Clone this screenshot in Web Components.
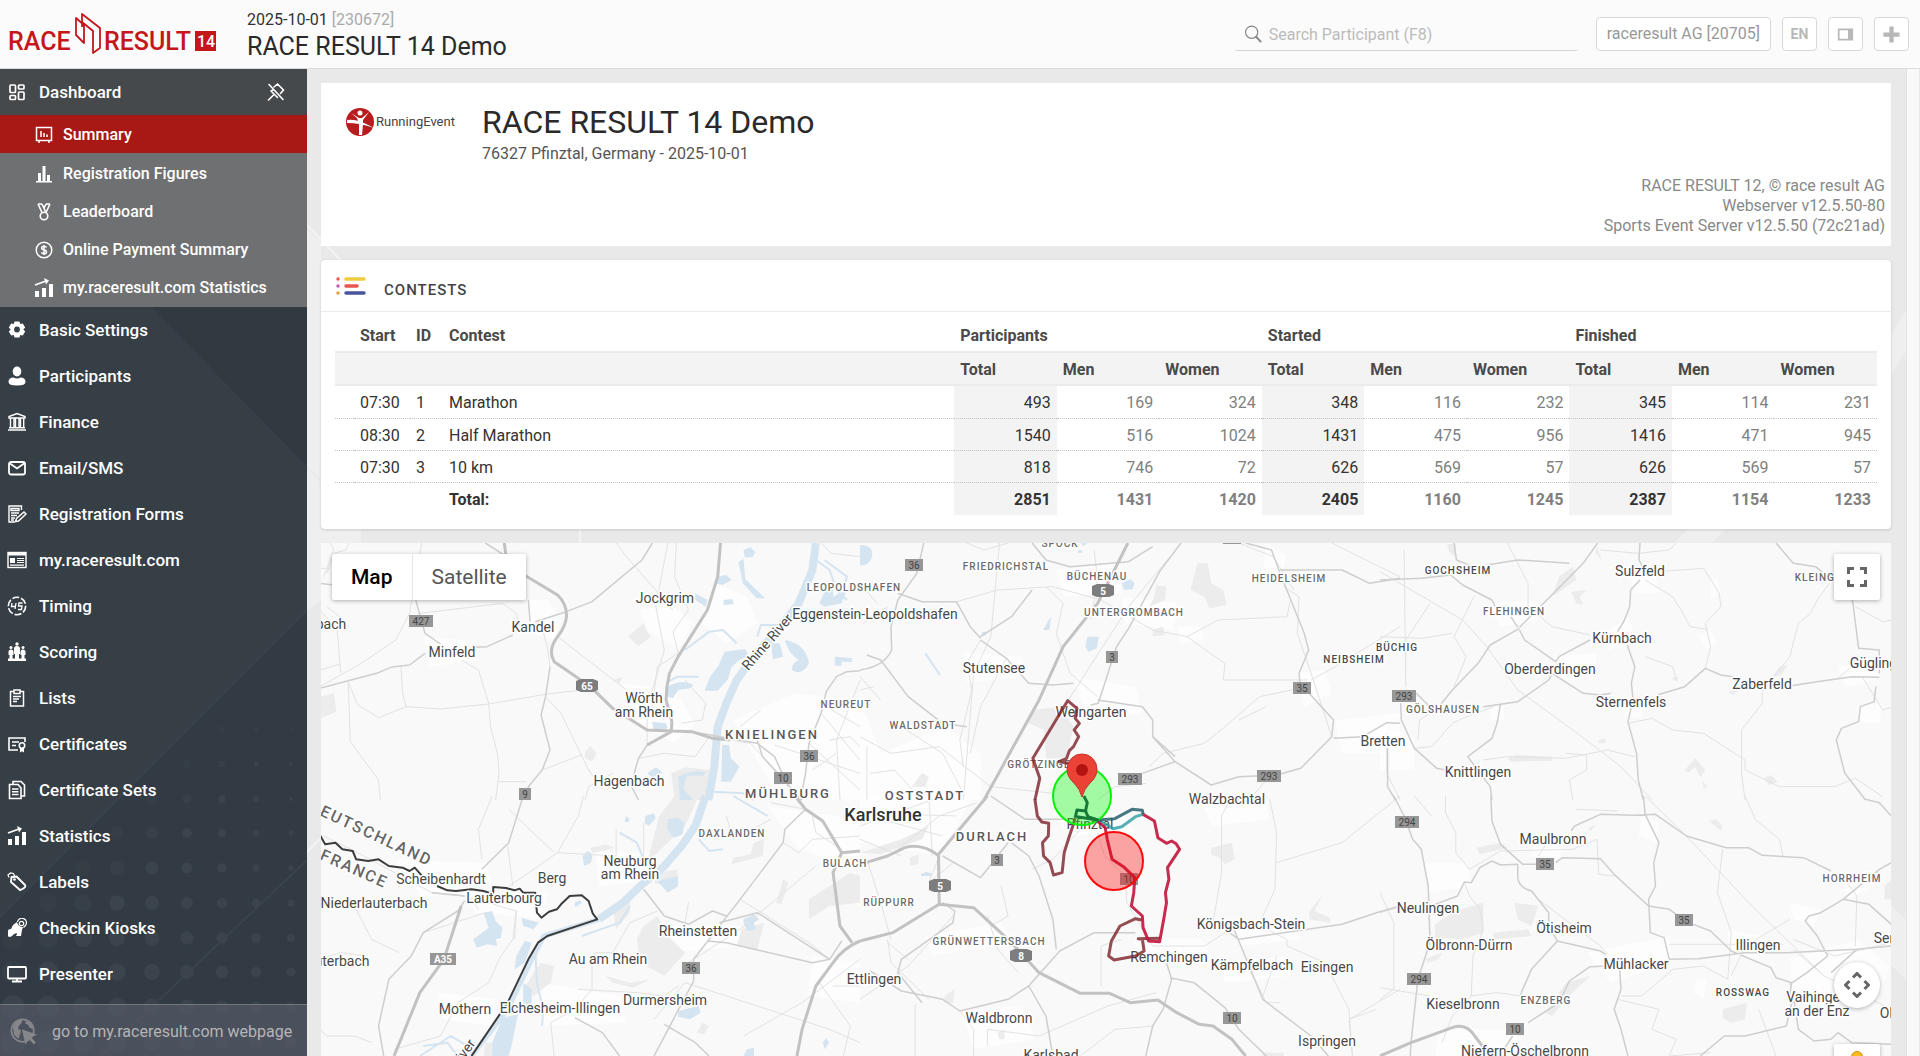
<!DOCTYPE html>
<html lang="en">
<head>
<meta charset="utf-8">
<title>RACE RESULT 14 Demo</title>
<style>
html,body{height:100%;margin:0}
body{font-family:Roboto,"Liberation Sans",sans-serif;font-size:16px;line-height:20px;color:#333;background:#e9e9e9;overflow:hidden}
</style>
</head>
<body>
<rr-app>
  <rr-topbar slot="top" date="2025-10-01" event-id="[230672]" name="RACE RESULT 14 Demo"></rr-topbar>
  <rr-sidebar slot="side"></rr-sidebar>
  <rr-event-header>
    <span slot="title">RACE RESULT 14 Demo</span>
    <span slot="place">76327 Pfinztal, Germany - 2025-10-01</span>
    <div slot="versions">RACE RESULT 12, © race result AG</div>
    <div slot="versions">Webserver v12.5.50-80</div>
    <div slot="versions">Sports Event Server v12.5.50 (72c21ad)</div>
  </rr-event-header>
  <rr-card heading="CONTESTS"><rr-contests></rr-contests></rr-card>
  <rr-map></rr-map>
</rr-app>

<script>
const ICONS = {
  dashboard:'<g fill="none" stroke="currentColor" stroke-width="1.7"><rect x="3" y="3" width="5.5" height="7.5" rx="1"/><rect x="3" y="13.5" width="5.5" height="4" rx="1"/><rect x="11.5" y="3" width="5.5" height="4" rx="1"/><rect x="11.5" y="10" width="5.5" height="7.5" rx="1"/></g>',
  summary:'<g fill="none" stroke="currentColor" stroke-width="1.5"><rect x="2.5" y="2.5" width="15" height="13"/><path d="M5 16v2M15 16v2M7 6v6M10 8v4M13 9.500v2.500"/></g>',
  bars:'<path fill="currentColor" d="M2 17h16v1.500H2zM4 9h3v8H4zM8.500 2h3v15h-3zM13 11h3v6h-3z"/>',
  medal:'<g fill="none" stroke="currentColor" stroke-width="1.600"><circle cx="10" cy="14" r="3.800"/><path d="M4 2l4 8.500M8 2l3.500 7.500M16 2l-4 8.500M12 2l-2 4M4 2h4M12 2h4"/></g>',
  coin:'<circle cx="10" cy="10" r="7.800" fill="none" stroke="currentColor" stroke-width="1.500"/><path d="M12.500 7.500q-.8-1.200-2.500-1.200-2.300 0-2.300 1.800 0 1.600 2.300 1.900 2.500.3 2.500 1.900 0 1.900-2.500 1.900-1.800 0-2.700-1.400M10 5v10" fill="none" stroke="currentColor" stroke-width="1.500"/>',
  stats:'<path fill="currentColor" d="M1 13h4v6H1zM8 10h4v9H8zM15 6h4v13h-4z"/><path d="M1 7l11-4" stroke="currentColor" stroke-width="1.800"/><path fill="currentColor" d="M10 0l5 2.500-3 4z"/>',
  unpin:'<g fill="none" stroke="currentColor" stroke-width="1.600" stroke-linecap="round"><path d="M3 2.500l14 15M8 5l3.500-3 6 6-3 3.500M5 9l6.500 6.500M8 12.500L2.500 18M5 9l2-1"/></g>',
  gear:'<path fill="currentColor" fill-rule="evenodd" d="M7.500 1.500h5l.7 2.500 2.600-.6 2.400 4-1.900 2.100 1.900 2.100-2.400 4-2.600-.6-.7 2.500h-5l-.7-2.500-2.600.6-2.400-4 1.900-2.100-1.900-2.100 2.400-4 2.600.6zM10 6.600a2.900 2.900 0 100 5.800 2.900 2.900 0 000-5.800z"/>',
  person:'<ellipse cx="10" cy="5.500" rx="4.300" ry="5" fill="currentColor"/><path fill="currentColor" d="M1.500 16q0-4.500 5-4.500 3.500 2 7 0 5 0 5 4.500 0 3.500-8.500 3.500T1.500 16z"/>',
  bank:'<path fill="none" stroke="currentColor" stroke-width="1.400" d="M2 6V4.500l8-3 8 3V6zM3.500 6.500v9M7 6.500v9M8.500 6.500v9M12 6.500v9M13.500 6.500v9M16.700 6.500v9M2 15.700h16M1 18h18"/>',
  mail:'<rect x="2" y="4" width="16" height="12.500" rx="2" fill="none" stroke="currentColor" stroke-width="1.800"/><path d="M3 5.500l7 5 7-5" fill="none" stroke="currentColor" stroke-width="1.800"/>',
  form:'<path fill="none" stroke="currentColor" stroke-width="1.400" d="M14.500 6V2H2v16h6M4 4.500h8v2H4zM4 9h8M4 11.500h6M4 14h4M4 16h3M8.500 17.500l1-3L17 8l2 2-7.500 7z"/>',
  web:'<rect x="1" y="2.500" width="18" height="15" fill="none" stroke="currentColor" stroke-width="1.400"/><path fill="currentColor" d="M1 2.500h18v3H1zM3 8h5v5H3z"/><path stroke="currentColor" stroke-width="1.200" d="M10 8.500h7M10 10.500h7M10 12.500h7M3 15.200h14"/>',
  timer:'<circle cx="10" cy="10" r="8.700" fill="none" stroke="currentColor" stroke-width="1.600" stroke-dasharray="7 2"/><path d="M5 7l-.5 3.500H9M9 7l-1 6M15.500 7H12l-.5 3h3.500l-.5 3.500H11" fill="none" stroke="currentColor" stroke-width="1.300"/>',
  podium:'<path fill="currentColor" d="M1 16.500h18V19H1zM1.500 10q0-2.500 2.500-2.500T6.500 10v3h-1v4h-3v-4h-1zM7 6.500Q7 4 10 4t3 2.500V12h-1v5H8v-5H7zM13.500 10q0-2.500 2.500-2.500t2.500 2.500v3h-1v4h-3v-4h-1z"/><g fill="currentColor"><circle cx="4" cy="5.500" r="1.500"/><circle cx="10" cy="2" r="1.700"/><circle cx="16" cy="5.500" r="1.500"/></g>',
  list:'<path fill="none" stroke="currentColor" stroke-width="1.500" d="M7 3.500H3.500V18h13V3.500H13M7 2h6v3.500H7zM6 8.500h8M6 11h6M6 13.500h4"/>',
  cert:'<path fill="none" stroke="currentColor" stroke-width="1.600" d="M18 8V4H2v12h9M5 8h7M5 11.500h4"/><circle cx="15" cy="11.500" r="2.700" fill="none" stroke="currentColor" stroke-width="1.600"/><path fill="currentColor" d="M13 14h4v4.500l-2-1.200-2 1.200z"/>',
  sets:'<path fill="none" stroke="currentColor" stroke-width="1.600" d="M6 4V1.500h8l3.500 3.500v11H14M2.500 4.500H11L14 8v10.500H2.500zM5 9h6.500M5 11.700h6.500M5 14.500h6.500"/>',
  label:'<path fill="none" stroke="currentColor" stroke-width="1.900" stroke-linejoin="round" d="M4.500 5l5-.5L18 13q1 1.500-1 3t-4 2L4 10z"/><path fill="none" stroke="currentColor" stroke-width="1.200" d="M2 5.500L1 3l2.500-2 3 .5 1 2.500-1 2"/><circle cx="7.500" cy="7.500" r="1.300" fill="currentColor"/>',
  kiosk:'<path fill="currentColor" d="M6 7l4-3q1 5 6 5l-1 3-1 6h-5l1-2-1-3-3 2-3-2zM1 13q0-2 3-2l3 2 2-1 1 3-3 1-2 2q-3 2-4 0z"/><circle cx="14.500" cy="5.500" r="2.200" fill="none" stroke="currentColor" stroke-width="1.200"/><path d="M10.500 4a4.500 4.500 0 118 3.500l-2 2" fill="none" stroke="currentColor" stroke-width="1.200"/>',
  screen:'<rect x="1" y="3" width="18" height="11.500" rx="1" fill="none" stroke="currentColor" stroke-width="1.800"/><path d="M10 14v3M5 17.500h10" stroke="currentColor" stroke-width="1.800"/>',
  globe:'<circle cx="9" cy="9" r="8" fill="none" stroke="currentColor" stroke-width="1.200"/><path fill="currentColor" d="M2 6l3-4 4-1-1 3-2 2v2l2 1-1 3-1 3-3-3zM11 2l4 2 2 4-3-1-1-2-2-1zM8.500 8l11 4-4.500 1.500 3.500 4-1.500 1.500-3.500-4-2.500 4z"/>',
  search:'<circle cx="8.500" cy="8" r="6.800" fill="none" stroke="currentColor" stroke-width="1.300"/><path d="M13 12.500l6 6.500" stroke="currentColor" stroke-width="2.200"/>',
  panel:'<path fill="currentColor" fill-rule="evenodd" d="M1 3h18v14H1zM3 5v10h10V5z"/>',
  plus:'<path fill="currentColor" d="M7.500 .5h5v7h7v5h-7v7h-5v-7h-7v-5h7z"/>'
};

/* Registers an element whose open shadow root holds the given markup. */
function element(name, render) {
  customElements.define(name, class extends HTMLElement {
    constructor() { super(); this.attachShadow({mode: 'open'}); }
    connectedCallback() {
      this.shadowRoot.innerHTML = typeof render === 'function' ? render(this) : render;
    }
  });
}

element('rr-icon', el => `<style>:host{display:inline-flex;flex:none;width:20px;height:20px}svg{width:100%;height:100%}</style>
<svg viewBox="0 0 20 20" aria-hidden="true">${ICONS[el.getAttribute('name')]}</svg>`);

element('rr-app', `<style>
:host{display:grid;height:100vh;grid-template:69px minmax(0,1fr)/307px minmax(0,1fr)}
header{grid-column:1/3;display:grid}
aside{display:grid;min-height:0}
main{display:grid;min-height:0;overflow:hidden;grid-template-columns:minmax(0,1fr) 14px}
main>*{grid-row:1}
.bg{grid-column:1;width:100%;height:100%;min-height:0}
.col{grid-column:1;display:flex;flex-direction:column;gap:14px;padding:14px 15px 0 14px;min-height:0}
.gutter{grid-column:2;background:#f9f9f9;border-left:1px solid #e4e4e4;border-right:1px solid #e8e8e8;box-sizing:border-box}
</style>
<header><slot name="top"></slot></header>
<aside><slot name="side"></slot></aside>
<main>
<svg class="bg" viewBox="307 69 1599 987" preserveAspectRatio="none" aria-hidden="true"><path d="M307 229v240l14 14V243zM307 466l14 14v120l-14 10zM321 529h40v14h-40zM1674 543l14-14h38l-14 14zM1891 335l15-24v40l-15 24zM1891 905l15 15v60l-15-15z" fill="#efefef"/><path d="M307 225l40 42M580 525v20M307 852l14-14" stroke="#f3f3f3" stroke-width="2"/></svg>
<div class="col"><slot></slot></div><div class="gutter"></div></main>`);

element('rr-topbar', el => `<style>
:host{display:flex;align-items:center;background:#fbfbfb;border-bottom:1px solid #dcdcdc;padding-right:11px;box-sizing:border-box}
.logo{flex:none;width:247px;height:68px}
.logo text{font-family:Roboto,sans-serif;font-weight:500;fill:#c5161c}
.names{display:flex;flex-direction:column;flex:1;padding-top:4px}
.date{line-height:22px}.date span{color:#aaa}
h1{margin:0;font-size:25px;line-height:32px;font-weight:400;color:#2a2a2a}
label{display:flex;align-items:center;gap:7px;width:343px;height:34px;box-sizing:border-box;padding-left:9px;border-bottom:1px solid #d5d5d5;border-radius:3px;color:#888;margin-right:18px}
label rr-icon{width:18px;height:18px}
input{flex:1;min-width:0;border:0;background:none;font:inherit;outline:0;padding:2px 0 0}
input::placeholder{color:#bbb;opacity:1}
button{height:34px;min-width:35px;display:flex;align-items:center;justify-content:center;box-sizing:border-box;border:1px solid #d8d8d8;border-radius:4px;background:#fff;color:#b8b8b8;font:inherit;padding:0;margin-left:11px}
button.acc{padding:0 10px;color:#999;margin:0}
button.lang{font-size:14px;font-weight:700}
button rr-icon{width:17px;height:17px}
</style>
<svg class="logo" viewBox="0 0 247 68" role="img" aria-label="Race Result 14"><text x="8" y="50" font-size="25">RACE</text><text x="104" y="50" font-size="25">RESULT</text>
<path d="M76 18l8 7v18l-8-8zM82 27V14l18 14v20l-7 5V31L82 22" fill="none" stroke="#c5161c" stroke-width="1.800" stroke-linejoin="round"/><rect x="195" y="31" width="21" height="20" fill="#c5161c"/><text x="197" y="47" font-size="16" style="fill:#fff">14</text></svg>
<div class="names"><div class="date">${el.getAttribute('date')} <span>${el.getAttribute('event-id')}</span></div><h1>${el.getAttribute('name')}</h1></div>
<label><rr-icon name="search"></rr-icon><input type="text" aria-label="Search Participant" placeholder="Search Participant (F8)"></label>
<button class="acc">raceresult AG [20705]</button><button class="lang">EN</button><button aria-label="Panel"><rr-icon name="panel"></rr-icon></button><button aria-label="Add"><rr-icon name="plus"></rr-icon></button>`);

element('rr-nav-item', el => `<style>
:host{display:block}
a{display:flex;align-items:center;height:46px;box-sizing:border-box;padding:0 21px 1px 7px;gap:12px;color:#fff;text-decoration:none;font-size:17px;font-weight:500}
a>span{flex:1}
:host([sub]) a{height:38px;padding:2px 20px 0 34px;gap:9px;font-size:16px}
:host([active]) a{background:#a81916}
</style><a href="#"><rr-icon name="${el.getAttribute('icon')}"></rr-icon><span><slot></slot></span><slot name="end"></slot></a>`);

element('rr-sidebar', () => {
  let dots = '';
  for (let k = 0; k < 10; k++) for (let j = 0; j < 9; j++) {
    const o = Math.min(1, (j + k - 5) / 3);
    if (o > 0) dots += `<circle cx="${13 + Math.round(j * 34.75)}" cy="${729 + Math.round(k * 34.75)}" r="${1 + k * .5 + (8 - j) * .85}" opacity="${o}"/>`;
  }
  const sub = [['summary','Summary'],['bars','Registration Figures'],['medal','Leaderboard'],['coin','Online Payment Summary'],['stats','my.raceresult.com Statistics']];
  const items = [['gear','Basic Settings'],['person','Participants'],['bank','Finance'],['mail','Email/SMS'],['form','Registration Forms'],['web','my.raceresult.com'],['timer','Timing'],['podium','Scoring'],['list','Lists'],['cert','Certificates'],['sets','Certificate Sets'],['stats','Statistics'],['label','Labels'],['kiosk','Checkin Kiosks'],['screen','Presenter']];
  return `<style>
:host{display:grid;background:#323b43;overflow:hidden;min-height:0}
svg.bg,nav{grid-area:1/1;min-height:0;width:100%}
svg.bg{height:100%}
nav{display:flex;flex-direction:column;z-index:1}
.head{background:#46494b}
.subs{background:#6f7072;padding-bottom:1px}
.subs rr-nav-item[active]{margin-bottom:1px}
.subs,.head{flex:none}
.rest{flex:1;min-height:0;overflow:hidden}
.foot{flex:none;height:52px;box-sizing:border-box;border-top:1px solid #74777a;background:rgba(84,88,102,.75);display:flex;align-items:center;gap:14px;padding:2px 0 0 10px;color:#b4b5b5;text-decoration:none;white-space:nowrap}
.foot rr-icon{width:28px;height:28px;color:#85868a}
</style>
<svg class="bg" viewBox="0 69 307 987" preserveAspectRatio="none" aria-hidden="true"><path d="M0 307h152l155 159v144L0 917z" fill="#363e46"/><path d="M152 307l155 159V307z" fill="#313941"/><path d="M307 610L0 917M307 860L100 1056" stroke="#3a434b" stroke-width="2"/><g fill="#3b444c">${dots}</g></svg>
<nav aria-label="Main">
<div class="head"><rr-nav-item icon="dashboard">Dashboard<rr-icon slot="end" name="unpin"></rr-icon></rr-nav-item></div>
<div class="subs">${sub.map((s, i) => `<rr-nav-item sub ${i ? '' : 'active'} icon="${s[0]}">${s[1]}</rr-nav-item>`).join('')}</div>
<div class="rest">${items.map(s => `<rr-nav-item icon="${s[0]}">${s[1]}</rr-nav-item>`).join('')}</div>
<a class="foot" href="#"><rr-icon name="globe"></rr-icon>go to my.raceresult.com webpage</a></nav>`;
});

element('rr-event-header', `<style>
:host{display:flex;background:#fff;height:163px;box-sizing:border-box;padding:0 6px 0 24px;flex:none}
.logo{width:137px;height:80px;flex:none}
.t{flex:1;padding-top:20px}
h2{margin:0;font-weight:400;font-size:32px;line-height:38px;color:#2a2a2a}
p{margin:3px 0 0;color:#555}
.v{align-self:flex-end;text-align:right;color:#888;padding-bottom:10px}
</style>
<svg class="logo" viewBox="0 0 137 80" role="img" aria-label="RunningEvent"><circle cx="15" cy="39" r="14" fill="#b81c1f"/><circle cx="15" cy="30" r="2.500" fill="#fff"/><path d="M6 30l8 5h3l7-6-6 8v4l-1 11h-3v-11l-2-6zM2 37q10-2 27 8-14-5-27-5z" fill="#fff"/><text x="31" y="43" font-size="13" fill="#444" font-family="Roboto">RunningEvent</text></svg>
<div class="t"><h2><slot name="title"></slot></h2><p><slot name="place"></slot></p></div>
<div class="v"><slot name="versions"></slot></div>`);

element('rr-card', el => `<style>
:host{display:block;flex:none;background:#fff;border-radius:4px;box-shadow:0 1px 3px rgba(0,0,0,.15)}
header{display:flex;align-items:center;height:51px;border-bottom:1px solid #ebebeb;padding-left:15px;gap:18px}
h3{margin:8px 0 0;font-size:15px;font-weight:500;letter-spacing:1px;color:#444}
svg{width:30px;height:20px}
</style>
<header><svg viewBox="0 0 30 20" aria-hidden="true"><g stroke-width="3.500" stroke-linecap="round"><path d="M10 3h18" stroke="#efcb3f"/><path d="M10 10h11" stroke="#e9574b"/><path d="M10 17h18" stroke="#48559b"/></g><circle cx="2" cy="3" r="1.700" fill="#e9574b"/><circle cx="2" cy="10" r="1.700" fill="#c05cb0"/><circle cx="2" cy="17" r="1.700" fill="#f39a3c"/></svg><h3>${el.getAttribute('heading')}</h3></header><slot></slot>`);

element('rr-contests', () => {
  const rows = [
    ['07:30','1','Marathon',493,169,324,348,116,232,345,114,231],
    ['08:30','2','Half Marathon',1540,516,1024,1431,475,956,1416,471,945],
    ['07:30','3','10 km',818,746,72,626,569,57,626,569,57],
    ['','','Total:',2851,1431,1420,2405,1160,1245,2387,1154,1233]];
  return `<style>
:host{display:block;padding:0 14px 14px}
table{width:100%;border-collapse:separate;border-spacing:0;table-layout:fixed}
.g{width:6.65%}
th,td{padding:2px 6px 0;text-align:left;font-weight:400;box-sizing:border-box;white-space:nowrap;overflow:visible}
th{font-weight:700;color:#4a4a4a}
.a th{height:39px;padding-top:8px;box-sizing:border-box}
.b th{height:35px;background:#f3f3f3;border-top:2px solid #ebebeb;border-bottom:2px solid #ebebeb}
td{height:32px;border-bottom:1px dotted #c4c4c4}
tr:first-child td{height:33px}
.n{text-align:right;color:#808080}
.s{background:#f3f3f3;color:#333}
tr:last-child td{border-bottom:0;font-weight:700}
</style><table><colgroup><col style="width:19px"><col style="width:56px"><col style="width:33px"><col>${'<col class="g">'.repeat(9)}</colgroup>
<thead><tr class="a"><th></th><th>Start</th><th>ID</th><th>Contest</th><th colspan="3">Participants</th><th colspan="3">Started</th><th colspan="3">Finished</th></tr>
<tr class="b"><th colspan="4"></th>${'<th>Total</th><th>Men</th><th>Women</th>'.repeat(3)}</tr></thead>
<tbody>${rows.map(r => `<tr><td></td>${r.map((c, i) => `<td${i > 2 ? ` class="n${i % 3 ? '' : ' s'}"` : ''}>${c}</td>`).join('')}</tr>`).join('')}</tbody></table>`;
});

/* Map sheets: each has its origin on the canvas; coordinates inside a sheet are in sheet units. */
const UX = 2.904, UY = 3;
const SHEETS = [
 {x:320,y:540,
  wood:'M895 290L940 250L950 275L962 290L925 318zM0 470L40 460L48 515L0 535zM770 635L785 618L803 640L790 665L770 655zM850 420L880 410L870 430zM1020 700L1060 682L1135 690L1130 780L1030 780z',
  white:'M600 180h60l40 60-20 60-70-20zM930 210l90-20 60 60-40 80-90-60zM880 430l150 20 60 100-60 60-120-60zM300 290l120 10 30 60-130 20zM1200 540l180-80 188 20v300h-230zM1150 130l90 40 30 80-90 60-70-60z',
  water:'M1230 30l20-8 15 15-10 15-22 0zM1215 65l15-8 5 60 50 50 8 8-25 0-40-45zM1150 110l30-5 15 15-25 15-20-5zM1172 180l25-3 5 15-30 3zM1090 160l35 20-5 20-30-20zM1175 335l60-8 10 20-30 15-20 20-10 35-30 35-38 0 15-40 25-35zM1310 310l25 0 10 40-30 8zM1350 300q60 10 70 70-20 40-50 20 0-20 20-30-30-20-40-60zM1010 440q40-25 75-5l-10 10-35 5-15 25-15-5zM965 545l40 5 5 15-40 8zM950 700l25-18 20 15-30 15zM1168 615l20 0 5 40 25 25-25 45-28 0zM1450 190l20-45 20 0 0 25 40-20-15 40-50 10zM1495 350l50 5 0 10-30 0 0 12-20 0zM1040 710q40-20 80-15l-5 12-50 0-10 40 30 33-40 0z',
  stream:'M1060 330L1130 275L1170 270L1210 310M1440 60L1480 90L1500 150L1530 180M1465 60L1530 110L1520 150M1270 290L1280 255L1340 255M1010 425L1040 410L1100 410M1140 755L1230 760L1260 780',
  hw:'M535 9L542 60L598 108L690 165Q715 190 716 225Q716 255 690 290Q660 330 680 365L750 415L800 455L850 505L950 570L1080 575L1140 595L1190 600M1163 9L1155 110L1125 210L1040 350L1015 400Q1005 440 1005 480L1022 545L1020 575L950 615',
  main:'M1270 600L1285 650L1320 690L1400 780M1568 392L1530 395L1500 410L1470 455L1455 520L1420 610L1410 700L1395 780M278 180L290 225L305 280L350 312M0 445L90 420L165 400L205 382L260 375L305 340M450 322L485 320L560 285M625 245L715 215L790 185L935 60L965 9M668 380L655 470L642 525L668 630L645 690L605 740L600 780M950 615L925 655L915 690L905 740L925 780M1080 575L1270 610L1320 650L1360 740M480 9L535 45M605 180L610 245M0 130L40 135',
  minor:'M82 427L110 495L170 533L250 500L350 507L490 492L660 462L745 452M82 427L88 605L170 720L175 780M235 375L240 460L250 500M410 360L460 390L490 490L495 560L515 640L520 700L510 780M690 290L890 450M655 470L700 520L780 690L800 720M645 690L760 645M0 440L120 370L220 300L260 220L295 9M290 220L530 190L570 220L580 260M640 245L660 320L668 380M1035 9L1030 110L1070 210L1025 275L1040 340L980 380L965 500L1000 540M1010 9L975 200L1000 330L950 500L950 620M860 9L890 50L1025 210M1050 550L1110 540L1120 490L1060 420M925 655L1000 640L1090 650L1130 590L1250 610L1350 720M1455 9L1485 40L1568 50M1470 500L1568 560M1455 520L1568 660M1480 600L1540 590L1568 620M1420 610L1568 750M1430 690L1500 640M1510 780L1500 600L1568 420M1220 560L1280 510M1320 615L1568 700M30 9L40 30L10 110M85 9L75 30L40 40L20 100M0 85L30 85M0 390L60 372M60 400L50 270L0 210M20 200L70 240M520 725L600 725M770 780L780 740L850 700'},
 {x:320,y:796,
  wood:'M1030 0L1100 0L1060 90L1020 130L950 200L985 60zM940 390L980 360L1020 430L1060 470L1000 540L930 500L920 430zM1225 400L1290 380L1270 460L1210 450zM1260 140L1290 130L1285 180L1195 205L1200 185L1250 175zM1420 310L1540 230L1568 240L1568 320L1480 330L1420 370zM640 500L680 510L670 560L620 600L590 580zM480 740L555 740L550 780L475 780zM785 155L830 145L855 155L820 165L790 170zM1345 250L1360 260L1340 325L1325 320zM830 540L900 560L960 550L910 575L850 560zM980 230L1040 220L1030 280L970 260zM1110 680l20 10-15 25-20-5zM850 340L900 310L900 350L860 400z',
  white:'M220 190l260 10 20 60-200 50zM420 290l240 0-10 80-200-20zM800 170l160 0 50 80-200 20zM980 390l240 0 20 60-230 20zM340 590l170 20-10 80-140-20zM640 560l230 40 20 80-250 10zM1300 30l268 40v150l-180-60zM1430 480l138 20v120l-150-20z',
  water:'M475 350l25-5 10 30 20 20-5 30-15 5 5 20-30-5-30 10-10-25 45-35zM585 365l50 15-15 20-30-10zM945 60l25-8 5 15-20 22-12-8zM1010 70l30-5 18 15-5 35-25 10-20-25zM762 180l15-15 15 10-5 25-20 10zM888 60l12 10-5 8-10 0zM740 320l15-8 5 10-20 12zM1230 370l30-15 15 15-15 10 5 20-25 5-10-25zM1040 645l60-15 5 20-30 20-35-8zM595 435l20 5-20 60-30 20 5-40zM530 665l45-10-20 100-10 25-45 0 0-40zM980 255l60-15 0 30-30 20zM1240 760l20-5 0 25-30 0zM1460 740l10-15 8 15-12 20zM590 560l25 20 0 50-25-10z',
  stream:'M290 780L380 720L420 745L450 740M625 460L630 560L648 640L645 690M760 420L870 380L900 330M1200 0L1300 60M1100 130L1130 165L1170 160M870 110L920 140L940 190M300 750L370 740L400 780',
  hw:'M410 330L360 490L290 590L215 780M1380 0L1410 40L1460 75L1515 170L1568 165M1515 170L1490 230L1510 390L1545 440M1568 435Q1520 455 1490 500L1440 570L1400 700L1385 780',
  main:'M590 0L548 140L470 220M1410 40L1350 100L1345 140L1220 310L1085 490L1085 555L970 780M420 315L400 345L300 410L265 480L200 550L170 690L185 780M1000 685L1090 740L1130 780M1515 435L1480 490L1430 500L1180 440L1125 435M940 280L1000 360L1070 385L1140 345L1180 360M325 290L420 300M740 665L820 710L870 780M1160 380L1270 350L1480 490',
  minor:'M10 120L100 165L325 290L420 300L570 345L565 430M0 490L60 470L130 480M100 330L150 430L230 470M500 0L460 100L470 190M545 150L560 270M548 40L680 170M765 0L750 60L690 170L550 270M940 80L940 190M860 100L860 180L690 170M420 315L440 310L460 340M525 480L560 430L570 345M525 480L490 560L400 620L350 720L215 760M790 500L790 580L740 640L670 680L680 780M785 500L800 470L850 470L900 380L980 345M1060 380L1070 320M1220 310L1420 440L1480 490M1410 40L1310 20M1345 140L1390 170L1430 130L1568 120M1180 60L1200 130L1310 70M1430 60L1440 110L1500 150M1070 500L1220 400L1440 210M750 580L920 590L1000 600L1040 570M480 350L300 410M970 670L1060 560L1480 700L1568 740M1230 720L1400 620L1568 490M1490 570L1568 570M1450 560L1540 690L1520 780M0 700L20 720L100 720L150 740'},
 {x:860,y:540,
  wood:'M500 510L580 500L620 560L600 650L540 660L535 570L490 550zM980 70L1010 70L1020 130L1055 150L1065 195L1015 205L1000 170L960 150zM860 135L890 140L885 180L840 200L855 170zM850 270L880 260L885 285L850 290zM540 620L580 620L560 650L540 645zM180 700L200 710L190 740L150 740z',
  white:'M570 90l180-20 10 90-170 10zM760 170l160 20-10 80-140-20zM300 340l170 10 10 60-170 20zM620 410l180 30 20 80-160 20zM1180 9l60 40-20 60-50-30zM1270 400l80-10 20 70-80 40zM1380 540l188-20v120l-170 0zM0 480l60 160 190-80 100 80v140H0zM920 260l70 0 10 40-70 10z',
  water:'M0 15Q40 15 35 50Q25 80 0 75zM760 130l25-12 12 10-5 20-25 2zM545 245l10-15-5 40-18 0zM660 290l33 0-5 35-25 10-8-15zM635 30l10 0 0 8-15 0zM640 10l20 0-10 8zM355 275l12 0-3 12-12-3z',
  stream:'M190 340L232 405',
  hw:'M778 9L690 190L590 320L520 480L360 780',
  main:'M932 9L870 95L780 265L745 320L692 490L670 495M185 9L165 100L110 180L90 260L92 330Q70 380 0 390M1120 9L1195 30L1220 100L1290 280L1303 330L1275 400L1278 430L1375 540L1370 590L1280 685L1210 705L1100 710L1020 735L915 665L850 590M915 665L820 700M1568 550L1530 548L1460 590L1375 595M690 480L820 500L850 540L850 590L915 650M620 430L560 435L490 430L425 355L350 300M350 295L320 260L280 185L180 185L110 160M350 290L440 230L500 150M20 345L60 360L140 470L240 550L310 560M1220 90L1400 90L1480 130L1568 115M500 9L540 60L610 80L780 65L850 20',
  minor:'M405 9L380 290L330 400L300 780M605 480L780 200L900 50M280 185L400 150L560 140L700 180L850 270L950 290L1030 350L1060 370L1055 420L1300 420M950 290L1040 240L1240 230L1250 180M310 9L360 30L430 9M350 300L310 370L325 450L290 600L300 680M425 355L350 500L320 640M540 140L590 190L570 280L610 400L690 470M1230 140L1275 170L1270 280L1310 400L1370 590M1530 580L1530 700L1568 780M1130 780L1180 720M840 680L880 640L1000 610L1060 560L1160 470L1300 440M1100 9L1200 50L1260 150M680 30L690 120L670 240M1370 9L1568 110M1310 420L1380 380L1568 260M0 590L90 640L230 620L380 740L560 760M120 560L240 640L300 760M30 700L100 690L180 780M0 450L40 440M0 410L60 480M10 250L80 200M0 130L50 190M20 620L20 780M690 780L740 740L830 730M1100 540L1180 500'},
 {x:860,y:796,
  wood:'M1020 155L1080 140L1088 190L1060 205L1045 185L1020 175zM145 185L170 175L170 205L145 208zM1305 345l40-50-25 50 45 20 0 15-60-10zM400 710l20-10 0 30-15 0zM0 170L120 130L200 90L180 130L60 175zM1170 770l60 0 0 10-60 0zM245 600l30-20-5 40-25 0z',
  white:'M0 0h330l-100 180-230-40zM290 640l180-10 40 100-180 30zM790 430l200 0 40 60-200 10zM560 50l200 0 40 60-200 10zM1080 380l180-10 20 60-180 20zM1040 500l200-20 10 60-190 20zM190 420l220-40 40 60-240 40zM990 10l190 0 10 60-170 20z',
  water:'M177 235l15-8 15 5 0 8-30 0z',
  stream:'',
  hw:'M370 0L228 175L230 325M0 435L95 410L230 325L330 335L440 440L520 530L640 592L725 592L785 620L865 612L920 650L985 685L1025 690L1080 730L1120 780M0 205L80 180L130 155Q180 140 230 180',
  main:'M240 180L350 245L430 140M380 0L480 70L620 70M900 545L970 560L1060 635L1100 700L1180 780M890 500L905 550L880 640L850 690L830 780M490 570L430 610L290 645L240 610L120 585L30 525M490 570L580 465L680 410L800 410M240 320L275 345L270 380L120 490L110 530L180 620M1568 330L1500 350L1400 385L1100 430L1060 400M570 460L560 370L520 240L490 180L440 140M1080 385L1170 610L1220 650L1310 720L1360 780M490 570L540 660L560 780',
  minor:'M0 610L140 510L270 360M140 490L80 440M80 430L90 500L200 610M160 625L160 780M290 645L330 700L330 780M700 570L700 450L760 430M640 100L560 190L500 220M690 110L710 180L770 240L775 320L850 450L1000 450L1060 410M1080 0L1050 60L1050 230L1025 380M1190 10L1210 110L1205 280L1170 360L1180 400L1240 430L1240 450L1350 500L1420 640L1430 780M1210 200L1400 140L1568 0M1420 670L1568 580M1170 600L1210 480M1120 500L1180 620L1220 620M370 360L400 460L460 530M410 270L430 360L380 390M370 750L370 700L520 720L720 630L860 590M640 780L740 700L850 690M120 180L0 130M110 160L230 60L340 20M60 70L240 120M0 90L240 0M20 190L60 320L90 430M0 50L280 60M200 0L210 180M270 200L200 260L230 180M1430 780L1420 670L1500 640'},
 {x:1380,y:540,
  wood:'M195 12L220 12L220 50L200 35zM520 110L560 80L570 120L500 170zM555 155L600 150L580 170L590 195L570 190zM370 655L395 645L500 650L500 662L380 665zM1160 380L1185 375L1165 405L1140 410zM1010 455l40-10-25 20zM885 690L915 655L945 690L930 712L915 680L895 698zM1115 715l20-10 20 20-25 10zM845 415l20-5 0 15zM935 720l15 20-10 5zM630 20l15 40-20-20zM635 600l20-5 0 15-20 0z',
  white:'M320 190l120-10 20 60-110 20zM640 290l80-60 30 80-90 20zM720 90l80 10 10 60-70 0zM920 290l40-20 20 40-30 20zM500 350l130-10-10 80-90 0zM710 470l60 0-10 60-50 0zM1330 380l130-20-20 60-90 20zM1380 500l80-10-10 60-50 0zM0 560l100 30v100l-100 0zM960 120l20-10 10 50-30 20zM320 500l40 0 0 40-40 0z',
  water:'',stream:'',
  hw:'',
  main:'M632 9L590 70L470 195L405 262M405 265L320 315L285 370L210 450L175 495M215 9L222 60L270 80M205 105L240 135L325 180L335 200M105 460L145 500M60 490L62 540L100 625L165 685L190 690M405 270L420 300L510 365L520 350L610 300M500 400L590 460L640 465L670 460M500 400L490 420L400 485L300 500M755 120L728 150L725 200L710 240L690 275M718 315L740 380L730 430L735 480L720 545L745 640L750 720L765 780M755 9L752 60L768 90M805 465L885 440L945 385L990 405L1025 410M1195 437L1240 430L1370 410L1450 412M1372 180L1390 325L1450 330L1450 400M1440 440L1435 485L1395 500L1390 545L1340 565L1325 600L1350 700L1410 780M1150 9L1200 70L1265 80L1300 110M310 75L400 60L485 65L550 70M0 120L120 115L205 105M350 490L340 550L325 595L255 650L320 740L325 780M380 230L400 262M22 625L22 740L45 780',
  minor:'M0 95L240 240L310 320L400 450L560 570L700 680L790 780M275 165L215 290L250 350L215 440M370 9L430 130L430 200L500 260L610 285M720 550L790 535L850 570L940 580L1060 660L1060 690L1160 740L1320 740L1380 715L1460 770M1110 455L1110 490L1050 570L1050 700L1060 780M1305 130L1270 180L1250 220L1215 250L1190 350L1110 455M800 95L940 85L985 160L990 200L945 250L960 320L945 385M770 120L850 170L880 220L900 260L950 268M300 660L370 650L540 655L660 630L740 650M540 640L600 645L600 690L550 720L560 780M770 350L850 380L860 420M100 625L150 620L210 550L240 535L330 500M110 600L115 540L175 500M0 290L120 295L210 280M75 390L75 300L120 230L145 190M75 440L70 30M640 30L750 40L840 30L860 9M1380 200L1460 245L1490 240M1330 415L1380 370M1400 410L1460 510L1490 500'},
 {x:1380,y:796,
  wood:'M160 385L220 345L300 320L300 410L240 430L160 425zM280 155L350 140L370 155L290 175zM390 320L460 330L440 390L400 370zM540 560L610 540L540 610L500 660L480 650zM995 640L1065 620L1060 670L1020 680L995 665zM1465 270L1485 250L1485 310L1465 310zM330 410L430 400L440 420L330 430zM605 95l25-10-20 20zM955 75l20-5 20 20-5 15zM130 490L180 470L170 490L140 500z',
  white:'M450 110l90 10-20 70-80-10zM130 200l120 0 20 70-130 20zM1190 320l90 20-20 50-60-20zM600 470l240-50 10 80-180 60zM1190 490l200-60 90 80-40 130-240-30zM1010 400l100 20-10 70-90-10zM760 60l50 20-10 60-50-20zM920 550l30 0-10 60-30-20zM1340 240l90-20 0 50-70 40zM170 700l230 0-10 80-230 0z',
  water:'',stream:'',
  hw:'M0 780L90 740L210 695Q250 680 275 720L305 760',
  main:'M40 0L70 60L95 130L120 160L140 270L145 430M145 440L110 550L90 740L88 780M322 0L325 75L350 145L415 205L455 205M510 200L530 185L640 188L680 235L780 330L840 340L860 355M910 385L960 405L1020 465L1135 515L1150 545L1195 560L1190 600M400 205L400 240Q400 275 440 285L490 350L490 390L515 435L640 465L655 475M515 435L440 520L410 590M660 510L610 512L550 555L520 620L430 680M410 590L410 600M385 720L360 760M840 490L925 488L1060 470L1180 470L1385 460L1485 450M765 0L770 55L810 140L795 200L800 270L780 310L785 410L825 425L840 490M555 105L565 90L640 55L740 58L800 55L890 120L1005 155L1070 155L1110 178L1230 185L1310 225M1485 200L1450 220L1345 310L1280 350L1245 360L1235 375L1270 420L1300 480L1240 530L1190 565M1345 310L1420 325L1485 385M695 510L700 580L680 640L700 700L720 780M400 205L350 207L325 195L290 215L265 260L245 258L225 300L160 325M930 780L1000 720L1060 720L1180 690L1200 600L1215 700L1260 735L1310 730L1330 710L1370 740L1485 745M1385 460L1310 530M1410 10L1450 20L1485 60',
  minor:'M770 0L880 110L1080 330L1290 540M190 0L190 50L220 110L220 170L260 220L350 165L560 160M100 0L150 60M245 258L260 300L290 340L300 400L270 480L265 600L210 660L180 740M460 310L640 450L660 475M995 160L980 290L1020 410L1010 550L940 510L850 520L760 600L700 600M840 445L1170 445M1190 370L1060 450L1020 540M1060 0L1090 70L1160 130L1170 180M560 160L630 130L635 235L680 240M0 290L40 380L40 580L0 610M260 600L340 590L410 600M145 600L0 575M0 350L50 335M570 40L690 45M1200 460L1290 540L1485 640M1340 240L1385 300L1380 450M1200 430L1320 480L1485 440M1100 640L1150 780M690 610L810 640L790 700L860 730L840 780L960 770M460 180L490 130'}
];
/* [sheet, centre x, baseline y, text, style] */
const LABELS = [
[0,1003,190,'Jockgrim'],[0,620,277,'Kandel'],[0,383,350,'Minfeld'],[0,32,267,'pach'],[0,941,490,'Wörth'],[0,940,531,'am Rhein'],[0,898,739,'Hagenbach'],[0,1313,596,'KNIELINGEN','big'],[0,1358,773,'MÜHLBURG','big'],
[1,900,209,'Neuburg'],[1,900,250,'am Rhein'],[1,675,261,'Berg'],[1,352,264,'Scheibenhardt'],[1,534,321,'Lauterbourg'],[1,157,337,'Niederlauterbach'],[1,65,510,'uterbach'],[1,835,503,'Au am Rhein'],[1,420,655,'Mothern'],[1,698,652,'Elchesheim-Illingen'],[1,1003,627,'Durmersheim'],[1,1099,420,'Rheinstetten'],[1,1195,123,'DAXLANDEN','cap'],[1,1526,213,'BULACH','cap'],
[2,-16,154,'LEOPOLDSHAFEN','cap'],[2,44,236,'Eggenstein-Leopoldshafen'],[2,423,91,'FRIEDRICHSTAL','cap'],[2,582,22,'SPÖCK','cap'],[2,687,119,'BÜCHENAU','cap'],[2,797,229,'UNTERGROMBACH','cap'],[2,1246,126,'HEIDELSHEIM','cap'],[2,389,398,'Stutensee'],[2,671,532,'Weingarten'],[2,-40,504,'NEUREUT','cap'],[2,182,567,'WALDSTADT','cap'],[2,530,684,'GRÖTZINGEN','cap'],[2,190,781,'OSTSTADT','big'],[2,1434,370,'NEIBSHEIM','cap dark'],[2,1560,332,'BÜCHIG','cap dark'],[2,1518,619,'Bretten'],[2,1067,793,'Walzbachtal'],
[3,68,76,'Karlsruhe','city'],[3,383,134,'DURLACH','big'],[3,668,98,'Pfinztal'],[3,83,331,'RÜPPURR','cap'],[3,376,448,'GRÜNWETTERSBACH','cap'],[3,40,563,'Ettlingen'],[3,403,680,'Waldbronn'],[3,556,793,'Karlsbad'],[3,1135,400,'Königsbach-Stein'],[3,898,497,'Remchingen'],[3,1138,522,'Kämpfelbach'],[3,1357,528,'Eisingen'],[3,1357,749,'Ispringen'],
[4,226,102,'GOCHSHEIM','cap dark'],[4,755,109,'Sulzfeld'],[4,1328,123,'KLEINGARTACH','cap'],[4,389,226,'FLEHINGEN','cap'],[4,702,309,'Kürnbach'],[4,493,402,'Oberderdingen'],[4,1108,447,'Zaberfeld'],[4,1456,385,'Güglingen'],[4,728,501,'Sternenfels'],[4,184,519,'GÖLSHAUSEN','cap'],[4,284,711,'Knittlingen'],
[5,502,144,'Maulbronn'],[5,1372,258,'HORRHEIM','cap'],[5,138,352,'Neulingen'],[5,533,411,'Ötisheim'],[5,259,462,'Ölbronn-Dürrn'],[5,742,518,'Mühlacker'],[5,1098,462,'Illingen'],[5,1520,442,'Sersheim'],[5,241,638,'Kieselbronn'],[5,482,624,'ENZBERG','cap'],[5,1053,600,'ROSSWAG','cap dark'],[5,1270,618,'Vaihingen'],[5,1270,660,'an der Enz'],[5,1576,667,'Oberriexingen'],[5,422,780,'Niefern-Öschelbronn']];
/* [sheet, centre x, centre y, number, kind] */
const SHIELDS = [[0,293,244,'427'],[0,775,439,'65','a'],[0,1421,648,'36'],[0,1344,713,'10'],[0,594,762,'9'],[1,357,488,'A35','w'],[1,1077,516,'36'],[2,157,75,'36'],[2,705,153,'5','a'],[2,731,351,'3'],[2,1284,443,'35'],[2,785,716,'293'],[2,1189,709,'293'],[3,398,193,'3'],[3,231,271,'5','a'],[3,468,479,'8','a'],[3,780,248,'10'],[3,1080,667,'10'],[4,70,468,'293'],[5,77,79,'294'],[5,480,204,'35'],[5,884,371,'35'],[5,114,550,'294'],[5,393,698,'10']];

element('rr-map', () => {
  const at = (s, x, y) => [SHEETS[s].x + Math.round(x / UX), SHEETS[s].y + Math.round(y / UY)];
  const layer = (key) => SHEETS.map(s => s[key] ? `<path class="${key}" transform="translate(${s.x} ${s.y}) scale(${1 / UX} ${1 / UY})" d="${s[key]}"/>` : '').join('');
  const free = (s, cls, d) => `<path class="${cls}" transform="translate(${SHEETS[s].x} ${SHEETS[s].y}) scale(${1 / UX} ${1 / UY})" d="${d}"/>`;
  const labels = LABELS.map(([s, x, y, t, c]) => { const p = at(s, x, y); return `<text class="${c || ''}" x="${p[0]}" y="${p[1]}">${t}</text>`; }).join('');
  const shields = SHIELDS.map(([s, x, y, t, k]) => {
    const [cx, cy] = at(s, x, y), w = k === 'a' ? 22 : k === 'w' ? 26 : t.length * 6 + 6, h = w / 2;
    const shape = k === 'a' ? `<path d="M${cx - 11} ${cy - 5}l5-2h12l5 2v9l-5 2h-12l-5-2z" fill="#7d7d7d"/>` : `<rect x="${cx - h}" y="${cy - 6}" width="${w}" height="12" fill="#979797"/>`;
    return `${shape}<text class="no ${k || ''}" x="${cx}" y="${cy + 4}">${t}</text>`;
  }).join('');
  return `<style>
:host{display:grid;flex:1;min-height:0;position:relative;overflow:hidden;background:#f9f9f9}
svg.map{width:100%;height:100%;min-height:0;display:block}
path{vector-effect:non-scaling-stroke}
.hw,.main,.minor,.stream,.river,.border,.track{fill:none;stroke-linejoin:round}
.wood{fill:#ececec}.white{fill:#fff;opacity:.6}.water{fill:#d5e4f1}
.stream{stroke:#d5e4f1;stroke-width:2px}.river{stroke:#d5e4f1;stroke-width:8px}.river.thin{stroke-width:5px}
.hw{stroke:#c2c2c2;stroke-width:3px}.main{stroke:#cecece;stroke-width:1.500px}.minor{stroke:#e2e2e2;stroke-width:1px}
.border{stroke:#3c3c3c;stroke-width:2px}
text{font-size:14px;text-anchor:middle;fill:#484848;stroke:#fff;stroke-width:3px;stroke-linejoin:round;paint-order:stroke}
.cap{font-size:10px;font-weight:500;letter-spacing:1px;fill:#6b6b6b}
.dark{fill:#484848}
.big{font-size:13px;font-weight:500;letter-spacing:2px;fill:#585858}
.city{font-size:18px;font-weight:500;fill:#333}
.nation{font-size:16px;font-weight:500;letter-spacing:2px;fill:#666;text-anchor:start}
.no{font-size:10px;stroke:none;fill:#444}.no.a,.no.w{fill:#fff;font-weight:700}
.track{stroke-width:3px;stroke:#7c2229;opacity:.8}
.track.red{stroke:#c2153c;opacity:.9}.track.dk{stroke:#1d5867}.track.teal{stroke:#2f9ea3}.track.green{stroke:#167a3a;opacity:1}
.type,.full,.cam,.peg{position:absolute;background:#fff;box-shadow:0 1px 4px rgba(0,0,0,.3);border-radius:2px}
.type{top:11px;left:11px;display:flex}
button{font:inherit;border:0;background:none;height:46px;padding:0 19px;font-size:21px;color:#565656}
.type button+button{border-left:1px solid #e6e6e6}
.type .on{font-weight:500;color:#000}
.full,.cam,.peg{right:11px;width:46px;height:46px;padding:0;display:flex;align-items:center;justify-content:center}
.full{top:11px}.cam{bottom:48px;border-radius:50%}.peg{bottom:-34px;align-items:flex-start;padding-top:6px}
</style>
<svg class="map" viewBox="321 543 1570 513" preserveAspectRatio="xMinYMin slice" role="img" aria-label="Map of the course area">
${layer('white')}${layer('wood')}${layer('water')}${layer('stream')}
${free(0,'river','M1440 9L1430 90L1390 190L1330 270L1260 350L1210 420L1180 490L1155 560L1145 680L1128 780')}
${free(1,'river','M1120 0L1090 90L1050 150L1000 210L930 270L880 320L810 370')}${free(1,'river thin','M810 370L650 420L610 500L545 640L440 780')}
${layer('minor')}${layer('main')}${layer('hw')}
${free(1,'border','M0 118L15 145L45 140L65 160L95 165L105 190L140 195L170 190L200 210L240 215L260 225L275 215L295 238M340 270L370 283L395 285L440 280L475 285L490 290L503 290L503 273L540 276L565 283L580 278L590 290L625 290L630 350L643 365L665 347L688 340L700 325L725 300L760 298L780 315L792 352L805 370L660 420L633 440L605 490L545 620L440 780')}
${labels}
<text transform="translate(771 645) rotate(-49)">Rhine River</text><text transform="translate(467 1056) rotate(-55)">River</text>
<text class="nation" transform="translate(319 815) rotate(25)">EUTSCHLAND</text><text class="nation" transform="translate(319 859) rotate(24)">FRANCE</text>
${shields}
<rect x="1223" y="540" width="18" height="4" fill="#979797"/>
${free(3,'track teal','M822 55L800 62L760 92L735 98L715 85L690 72')}${free(3,'track dk','M822 55L820 43L790 40L740 68L690 72')}
${free(2,'track','M620 672L578 665L600 655L608 632L620 620L635 590L622 570L637 550L625 535L630 505L603 482L502 655L522 715L508 780')}
${free(3,'track','M508 10L515 60L528 78L548 82L547 120L530 140L533 180L552 200L562 237L587 230L593 170L605 130L618 90L625 65')}
${free(3,'track','M818 372L800 368L755 390L730 435L722 480L738 492L800 480L825 465L820 430L808 428L870 427')}
${free(3,'track red','M680 68L712 95L718 130L732 190L765 212L798 245L795 290L788 330L820 360L822 395L838 435L870 437L882 370L890 320L887 290L897 250L893 215L928 160L918 143L905 135L890 142L865 125L855 75L822 55')}
<circle cx="1082" cy="796" r="29" fill="#00ff00" fill-opacity=".35" stroke="#0bef0b" stroke-width="2"/>
${free(3,'track green','M650 0L660 20L655 45L630 42L625 65M655 45L662 62L690 72L630 62')}
<circle cx="1114" cy="861" r="29" fill="#ff0000" fill-opacity=".35" stroke="#fb0b0b" stroke-width="2"/>
<path d="M1082 797q-2-8-8-14-7-6-7-14a15 15 0 0130 0q0 8-7 14-6 6-8 14z" fill="#ea4335" stroke="#c5302a" stroke-width="1"/><circle cx="1082" cy="770" r="6" fill="#b31412"/>
</svg>
<div class="type"><button class="on">Map</button><button>Satellite</button></div>
<button class="full" aria-label="Fullscreen"><svg width="20" height="20" viewBox="0 0 20 20"><path d="M1.500 7V1.500H7M13 1.500h5.500V7M18.500 13v5.500H13M7 18.500H1.500V13" fill="none" stroke="#666" stroke-width="3"/></svg></button>
<button class="cam" aria-label="Map camera controls"><svg width="26" height="26" viewBox="0 0 26 26"><path d="M9 5.500l4-4 4 4M9 20.500l4 4 4-4M5.500 9l-4 4 4 4M20.500 9l4 4-4 4" fill="none" stroke="#666" stroke-width="3"/></svg></button>
<button class="peg" aria-label="Street View"><svg width="16" height="30" viewBox="0 0 16 30"><circle cx="8" cy="7" r="5.500" fill="#fbbc20" stroke="#c98a15"/><path d="M2 14h12v12H2z" fill="#fbbc20"/></svg></button>`;
});
</script>
</body>
</html>
